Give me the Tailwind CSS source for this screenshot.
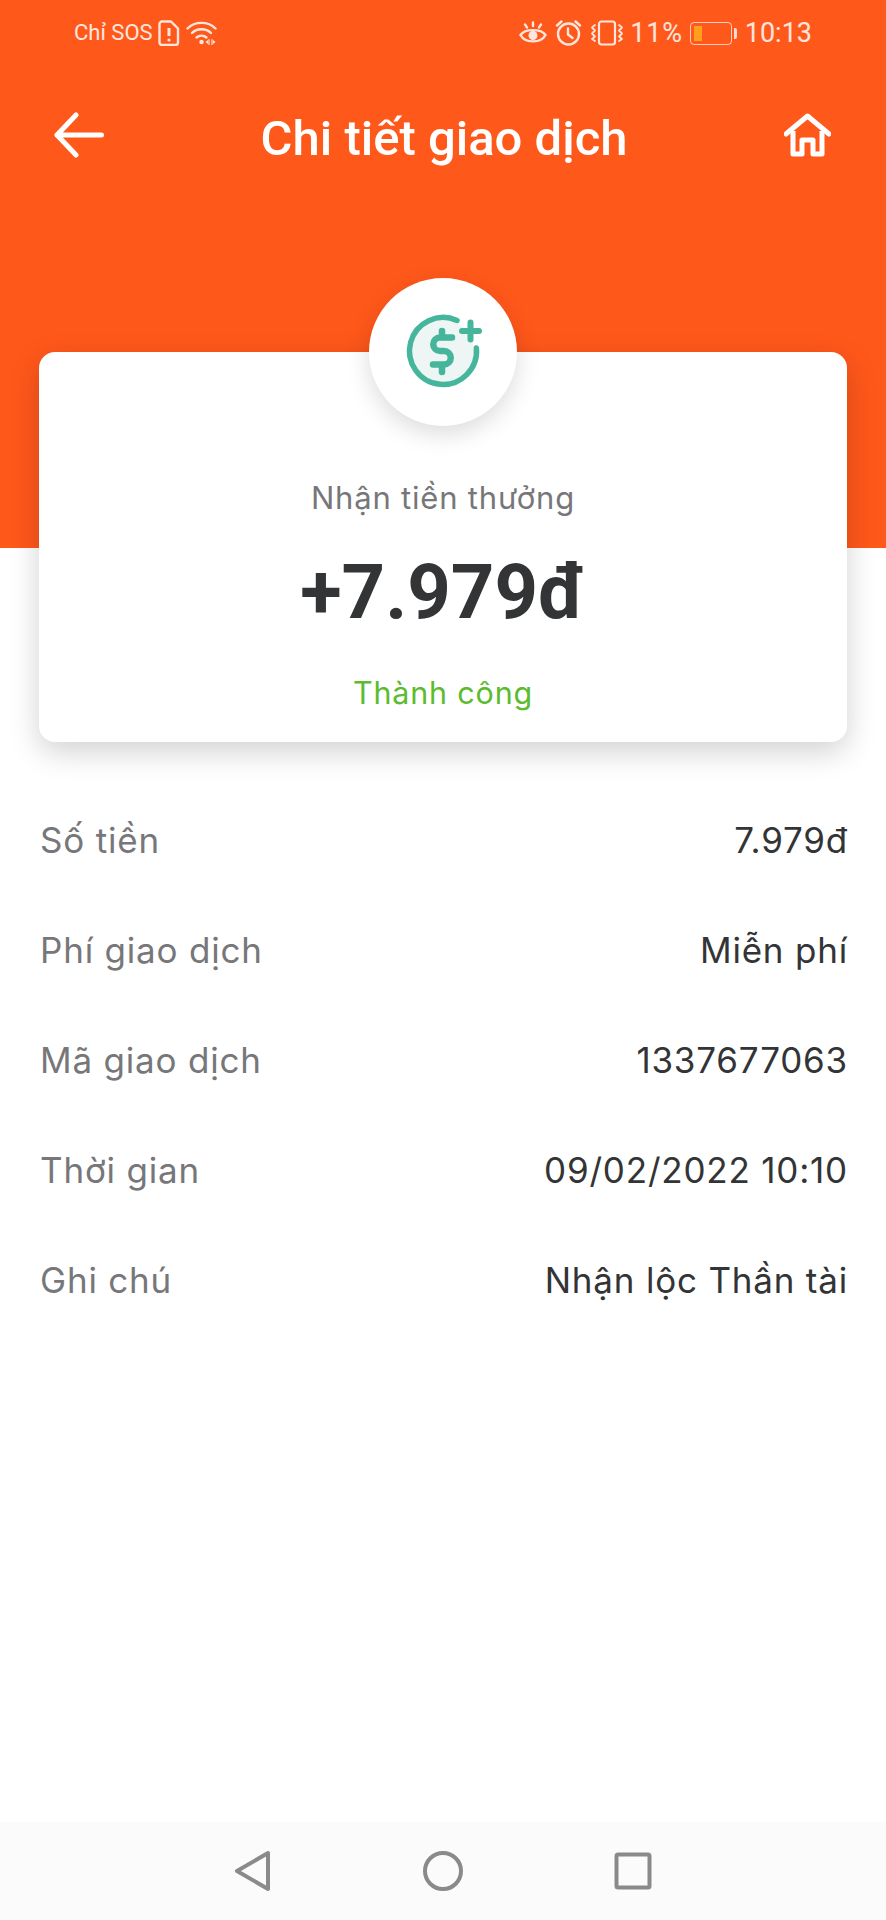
<!DOCTYPE html>
<html lang="vi">
<head>
    <meta charset="UTF-8">
    <meta name="viewport" content="width=device-width, initial-scale=1.0">
    <title>Chi tiết giao dịch</title>
    <script src="https://cdn.jsdelivr.net/npm/@tailwindcss/browser@4"></script>
</head>
<body class="bg-white font-['Roboto',sans-serif]">
<div class="flex flex-col w-[886px] h-[1920px] overflow-hidden">
    <!-- Orange header -->
    <header class="bg-[#ff581b] h-[548px] shrink-0 text-white">
        <!-- Status bar -->
        <div class="flex items-center justify-between h-[66px] pl-[74px] pr-[74px] text-white/85">
            <div class="flex items-center">
                <span class="text-[22px] leading-none">Chỉ SOS</span>
                <svg class="ml-[5px]" width="22" height="26" viewBox="0 0 22 26" fill="none" stroke="currentColor" stroke-width="2.4" stroke-linejoin="round">
                    <path d="M4 1.5h9l7 7v14a2.5 2.5 0 0 1-2.5 2.5h-13A2.500 2.500 0 0 1 1.500 22.500v-18.500A2.500 2.500 0 0 1 4 1.500z"/>
                    <path d="M11 8v8" stroke-width="3"/>
                    <circle cx="11" cy="20" r="1.6" fill="currentColor" stroke="none"/>
                </svg>
                <svg class="ml-[6px]" width="32" height="26" viewBox="0 0 32 26" fill="none" stroke="currentColor" stroke-width="2.400" stroke-linecap="round">
                    <path d="M1.500 8.500C9 1 22 1 29.500 8.500"/>
                    <path d="M6 13c5-5 14-5 19 0"/>
                    <path d="M10.500 17.500c2.700-2.500 7.300-2.500 10 0"/>
                    <circle cx="15.500" cy="22" r="2.200" fill="currentColor" stroke="none"/>
                    <path d="M23 19.500v5M26 19.500v5" stroke-width="1.200"/>
                    <path d="M22 20l-2.500 2 2.500 2zM27 20l2.500 2-2.500 2z" fill="currentColor" stroke="none"/>
                </svg>
            </div>
            <div class="flex items-center">
                <svg width="28" height="24" viewBox="0 0 28 24" fill="none" stroke="currentColor" stroke-width="2.400" stroke-linecap="round">
                    <path d="M1.500 14C6 7.500 22 7.500 26.500 14C22 22.500 6 22.500 1.500 14z"/>
                    <circle cx="14" cy="14.500" r="4.500" fill="currentColor" stroke="none"/>
                    <path d="M14 1.500v3.500M6 3.500l2 3M22 3.500l-2 3"/>
                </svg>
                <svg class="ml-[8px]" width="27" height="26" viewBox="0 0 27 26" fill="none" stroke="currentColor" stroke-width="2.400" stroke-linecap="round" stroke-linejoin="round">
                    <circle cx="13.500" cy="14" r="10.500"/>
                    <path d="M13 8.500v6l4.500 3.500"/>
                    <path d="M2 5.500l4.500-4M25 5.500l-4.500-4"/>
                </svg>
                <svg class="ml-[8px]" width="34" height="26" viewBox="0 0 34 26" fill="none" stroke="currentColor" stroke-width="2.200" stroke-linecap="round" stroke-linejoin="round">
                    <rect x="9" y="1.500" width="16" height="23" rx="2.500"/>
                    <path d="M5 5l-3 2.500 3 3-3 3 3 3-3 2.500 3 2" stroke-width="1.800"/>
                    <path d="M29 5l3 2.500-3 3 3 3-3 3 3 2.500-3 2" stroke-width="1.800"/>
                </svg>
                <span class="ml-[6px] text-[27px] leading-none tracking-[0.8px]">11%</span>
                <div class="flex items-center ml-[7px]">
                    <div class="flex items-center w-[42px] h-[23px] border border-white/70 rounded-[4px] pl-[3px]">
                        <div class="w-[8px] h-[15px] bg-[#ff9f1c]"></div>
                    </div>
                    <div class="w-[3px] h-[11px] ml-[2px] bg-white/80 rounded-r-[2px]"></div>
                </div>
                <span class="ml-[8px] text-[27px] leading-none">10:13</span>
            </div>
        </div>

        <!-- Title row -->
        <div class="flex items-center justify-between h-[138px] pl-[54px] pr-[55px]">
            <svg width="50" height="46" viewBox="0 0 50 46" fill="none" stroke="white" stroke-width="5" stroke-linecap="round" stroke-linejoin="round">
                <path d="M47.500 23H3M22 3L3 23l19 20"/>
            </svg>
            <h1 class="text-[49px] font-medium leading-none mt-[6px]">Chi tiết giao dịch</h1>
            <svg width="47" height="44" viewBox="0 0 47 44" fill="none" stroke="white" stroke-width="5" stroke-linejoin="round">
                <path d="M2 21L23.500 3 45 21" stroke-linecap="round"/>
                <path d="M9 18v23h9V27h11v14h9V18"/>
            </svg>
        </div>
    </header>

    <!-- Amount card -->
    <section class="relative z-10 -mt-[196px] mx-[39px] h-[390px] shrink-0 bg-white rounded-[16px] shadow-[0_10px_30px_rgba(0,0,0,0.18)] flex flex-col items-center">
        <div class="absolute -top-[74px] left-1/2 -translate-x-1/2 w-[148px] h-[148px] rounded-full bg-white shadow-[0_8px_24px_rgba(0,0,0,0.14)] flex items-center justify-center">
            <svg class="ml-[4px] -mt-[2px]" width="90" height="85" viewBox="0 0 90 85" fill="none" stroke="#45b59b" stroke-width="5.500" stroke-linecap="round" stroke-linejoin="round">
                <circle cx="43" cy="42" r="31" fill="#eef6f5" stroke="none"/>
                <path d="M57 11.500A33.500 33.500 0 1 0 76.400 39"/>
                <path stroke-width="6.500" d="M52 28.500H40a6.750 6.750 0 0 0 0 13.500h4a6.750 6.750 0 0 1 0 13.500H33"/>
                <path stroke-width="6.500" d="M42 22v6M42 56v7"/>
                <path stroke-width="6" d="M70.500 13.500v17M62 22h17"/>
            </svg>
        </div>
        <p class="mt-[127px] font-['Inter',sans-serif] text-[31px] tracking-[0.800px] leading-[38px] text-[#77777a]">Nhận tiền thưởng</p>
        <p class="mt-[30px] text-[76px] font-bold leading-[90px] text-[#333436]">+7.979đ</p>
        <p class="mt-[37px] font-['Inter',sans-serif] text-[30.500px] tracking-[0.800px] leading-[38px] text-[#5cbb2f]">Thành công</p>
    </section>

    <!-- Detail rows -->
    <dl class="mt-[43px] pl-[40px] pr-[38px] font-['Inter',sans-serif] text-[35px] tracking-[0.800px]">
        <div class="flex items-center justify-between h-[110px]">
            <dt class="text-[#77777a]">Số tiền</dt>
            <dd class="text-[#333436]">7.979đ</dd>
        </div>
        <div class="flex items-center justify-between h-[110px]">
            <dt class="text-[#77777a]">Phí giao dịch</dt>
            <dd class="text-[#333436]">Miễn phí</dd>
        </div>
        <div class="flex items-center justify-between h-[110px]">
            <dt class="text-[#77777a]">Mã giao dịch</dt>
            <dd class="text-[#333436]">1337677063</dd>
        </div>
        <div class="flex items-center justify-between h-[110px]">
            <dt class="text-[#77777a]">Thời gian</dt>
            <dd class="text-[#333436]">09/02/2022 10:10</dd>
        </div>
        <div class="flex items-center justify-between h-[110px]">
            <dt class="text-[#77777a]">Ghi chú</dt>
            <dd class="text-[#333436]">Nhận lộc Thần tài</dd>
        </div>
    </dl>

    <!-- Android nav bar -->
    <nav class="mt-auto h-[98px] bg-[#fbfbfb] flex items-center justify-center gap-[150px] pr-[1px]">
        <svg width="38" height="42" viewBox="0 0 38 42" fill="none" stroke="#8a8a8a" stroke-width="4" stroke-linejoin="round">
            <path d="M34 3L3 21l31 18z"/>
        </svg>
        <svg width="42" height="42" viewBox="0 0 42 42" fill="none" stroke="#8a8a8a" stroke-width="4">
            <circle cx="21" cy="21" r="18"/>
        </svg>
        <svg width="38" height="38" viewBox="0 0 38 38" fill="none" stroke="#8a8a8a" stroke-width="4" stroke-linejoin="round">
            <rect x="2.500" y="2.500" width="33" height="33" rx="1.500"/>
        </svg>
    </nav>
</div>
</body>
</html>
